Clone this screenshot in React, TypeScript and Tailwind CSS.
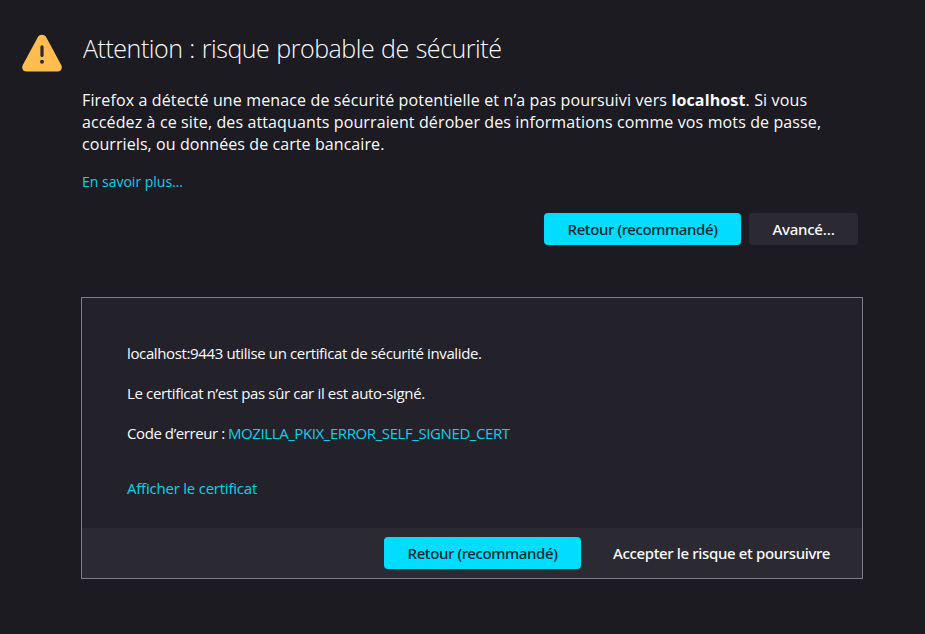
import type { ReactNode } from "react";

function Button({ primary = false, className = "", children }: { primary?: boolean; className?: string; children: ReactNode }) {
  const tone = primary ? "bg-[#00ddff] text-[#15252f]" : "bg-[#2b2a33] text-[#fbfbfe]";
  return (
    <button className={`h-8 shrink-0 rounded-[4px] text-center font-['Noto_Sans','Open_Sans',sans-serif] text-[15px] font-medium leading-[32px] whitespace-nowrap ${tone} ${className}`}>
      {children}
    </button>
  );
}

function WarningIcon() {
  return (
    <svg className="mt-[34px] h-[38px] w-10 shrink-0" viewBox="0 0 40 38" aria-hidden="true">
      <path
        d="M15.9 3.1C17.7-.1 22.3-.1 24.1 3.1L39.2 31.1C41 34.2 38.8 37.6 35.4 37.6H4.6C1.2 37.6-1 34.2.8 31.1Z"
        fill="#ffbd4f"
      />
      <path d="M20 12.8V21.4" stroke="#2b2a33" strokeWidth="3.2" strokeLinecap="round" />
      <circle cx="20" cy="27.7" r="2" fill="#2b2a33" />
    </svg>
  );
}

export default function App() {
  return (
    <main className="flex h-[634px] w-[925px] items-start overflow-hidden bg-[#1c1b22] pl-[22px] font-['Open_Sans','Noto_Sans',sans-serif] text-[15px] text-[#fbfbfe]">
      <WarningIcon />
      <div className="ml-[19px] w-[782px] pt-[29px]">
        <h1 className="ml-0.5 text-[25px] font-light leading-[38px] tracking-[-0.47px] [word-spacing:0.9px] whitespace-nowrap">
          Attention : risque probable de sécurité
        </h1>
        <div className="ml-px mt-[22px] text-[16px] leading-[22px] whitespace-nowrap">
          <p className="tracking-[0.14px]">
            Firefox a détecté une menace de sécurité potentielle et n’a pas poursuivi vers <strong className="font-bold">localhost</strong>. Si vous
          </p>
          <p className="tracking-[0.12px]">accédez à ce site, des attaquants pourraient dérober des informations comme vos mots de passe,</p>
          <p className="tracking-[0.08px]">courriels, ou données de carte bancaire.</p>
        </div>
        <a className="ml-px mt-4 block w-fit text-[14px] leading-[22px] text-[#14cfe8]">En savoir plus…</a>
        <div className="mt-5 flex justify-end gap-2 pr-[5px]">
          <Button primary className="w-[197px] tracking-[-0.4px]">Retour (recommandé)</Button>
          <Button className="w-[109px] tracking-[-0.25px]">Avancé…</Button>
        </div>
        <section className="mt-[52px] h-[282px] border border-[#7e7c86] bg-[#23222b]">
          <div className="h-[230px] pl-[45px] pt-[45px] text-[15px] leading-5 whitespace-nowrap">
            <p className="tracking-[-0.37px]">localhost:9443 utilise un certificat de sécurité invalide.</p>
            <p className="mt-5 tracking-[-0.35px]">Le certificat n’est pas sûr car il est auto-signé.</p>
            <p className="mt-5 flex">
              <span className="w-[101px] tracking-[-0.42px]">Code d’erreur :</span>
              <a className="tracking-[-0.41px] text-[#14cfe8]">MOZILLA_PKIX_ERROR_SELF_SIGNED_CERT</a>
            </p>
            <a className="mt-[35px] block w-fit tracking-[-0.22px] text-[#14cfe8]">Afficher le certificat</a>
          </div>
          <div className="flex h-[50px] justify-end gap-2 bg-[#2b2a33] pr-2 pt-[9px]">
            <Button primary className="w-[197px] tracking-[-0.4px]">Retour (recommandé)</Button>
            <Button className="w-[265px] tracking-[-0.35px]">Accepter le risque et poursuivre</Button>
          </div>
        </section>
      </div>
    </main>
  );
}
